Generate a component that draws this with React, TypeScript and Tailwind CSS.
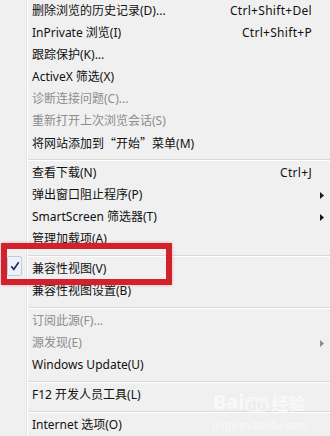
import React from 'react'

type Item =
  | { kind: 'sep' }
  | {
      kind: 'item'
      label: string
      shortcut?: string
      disabled?: boolean
      submenu?: boolean
      checked?: boolean
    }

const items: Item[] = [
  { kind: 'item', label: '删除浏览的历史记录(D)...', shortcut: 'Ctrl+Shift+Del' },
  { kind: 'item', label: 'InPrivate 浏览(I)', shortcut: 'Ctrl+Shift+P' },
  { kind: 'item', label: '跟踪保护(K)...' },
  { kind: 'item', label: 'ActiveX 筛选(X)' },
  { kind: 'item', label: '诊断连接问题(C)...', disabled: true },
  { kind: 'item', label: '重新打开上次浏览会话(S)', disabled: true },
  { kind: 'item', label: '将网站添加到“开始”菜单(M)' },
  { kind: 'sep' },
  { kind: 'item', label: '查看下载(N)', shortcut: 'Ctrl+J' },
  { kind: 'item', label: '弹出窗口阻止程序(P)', submenu: true },
  { kind: 'item', label: 'SmartScreen 筛选器(T)', submenu: true },
  { kind: 'item', label: '管理加载项(A)' },
  { kind: 'sep' },
  { kind: 'item', label: '兼容性视图(V)', checked: true },
  { kind: 'item', label: '兼容性视图设置(B)' },
  { kind: 'sep' },
  { kind: 'item', label: '订阅此源(F)...', disabled: true },
  { kind: 'item', label: '源发现(E)', disabled: true, submenu: true },
  { kind: 'item', label: 'Windows Update(U)' },
  { kind: 'sep' },
  { kind: 'item', label: 'F12 开发人员工具(L)' },
  { kind: 'sep' },
  { kind: 'item', label: 'Internet 选项(O)' },
]

// curly quotes should take the full-width CJK glyphs, as in the Windows menu
function Label({ text }: { text: string }) {
  const parts = text.split(/([“”])/)
  return (
    <>
      {parts.map((p, i) =>
        p === '“' || p === '”' ? (
          <span key={i} style={{ fontFamily: '"Noto Sans CJK SC", sans-serif' }}>
            {p}
          </span>
        ) : (
          <React.Fragment key={i}>{p}</React.Fragment>
        )
      )}
    </>
  )
}

function Gutter({ children }: { children?: React.ReactNode }) {
  return (
    <div className="relative flex h-full w-[28px] shrink-0">
      <div className="relative w-[26px]">{children}</div>
      <div className="w-px bg-[#e2e3e3]" />
      <div className="w-px bg-white" />
    </div>
  )
}

function Row({ item }: { item: Item }) {
  if (item.kind === 'sep') {
    return (
      <div className="flex h-[8px]">
        <Gutter />
        <div className="flex-1 pt-[5px]">
          <div className="h-px bg-[#d9d9d9]" />
          <div className="h-px bg-white" />
        </div>
      </div>
    )
  }
  const color = item.disabled ? 'text-[#8d8d8d]' : 'text-[#111111]'
  return (
    <div className={`flex h-[22px] items-center ${color}`}>
      <Gutter>
        {item.checked && (
          <div className="absolute left-[7px] top-[-2px] flex h-[20px] w-[15px] items-center justify-center rounded-[2px] border border-[#b9cbe0] bg-[#edf2f9]">
            <svg width="10" height="10" viewBox="0 0 10 10">
              <path d="M1.3 5.2 L3.8 8.3 L8.7 1.2" fill="none" stroke="#1d2c5e" strokeWidth="1.6" />
            </svg>
          </div>
        )}
      </Gutter>
      <div className="flex-1 whitespace-nowrap pl-[4px]">
        <Label text={item.label} />
      </div>
      {item.shortcut && <div className="tracking-[0.3px]">{item.shortcut}</div>}
      <div className="flex w-[18px] shrink-0 items-center justify-center pl-[2px]">
        {item.submenu && (
          <svg width="4" height="7" viewBox="0 0 4 7">
            <path d="M0 0 L4 3.5 L0 7 Z" fill={item.disabled ? '#8d8d8d' : '#1a1a1a'} />
          </svg>
        )}
      </div>
    </div>
  )
}

export default function App() {
  return (
    <div
      className="relative h-[436px] w-[330px] overflow-hidden bg-[#f0f0f0] text-[12px]"
      style={{ fontFamily: '"Noto Sans", "Noto Sans CJK SC", sans-serif' }}
    >
      {items.map((item, i) => (
        <Row key={i} item={item} />
      ))}

      {/* red highlight box drawn over the menu */}
      <div className="absolute left-[1px] top-[243px] h-[42px] w-[171px] border-[6px] border-[#d2202c] shadow-[0_0_3px_rgba(220,40,50,0.35)]" />

      {/* faint watermark */}
      <div className="pointer-events-none absolute left-[213px] top-[392px] flex items-end text-[20px] font-bold leading-none text-white opacity-60">
        <span>Bai</span>
        <span className="relative mx-[1px] rounded-[6px] bg-white/70 px-[2px] text-[15px] text-[#ececec]">du</span>
        <span className="ml-[2px] text-[17px]">经验</span>
      </div>
      <div className="pointer-events-none absolute left-[212px] top-[419px] text-[11px] leading-none text-white opacity-60">
        jingyan.baidu.com
      </div>
    </div>
  )
}
